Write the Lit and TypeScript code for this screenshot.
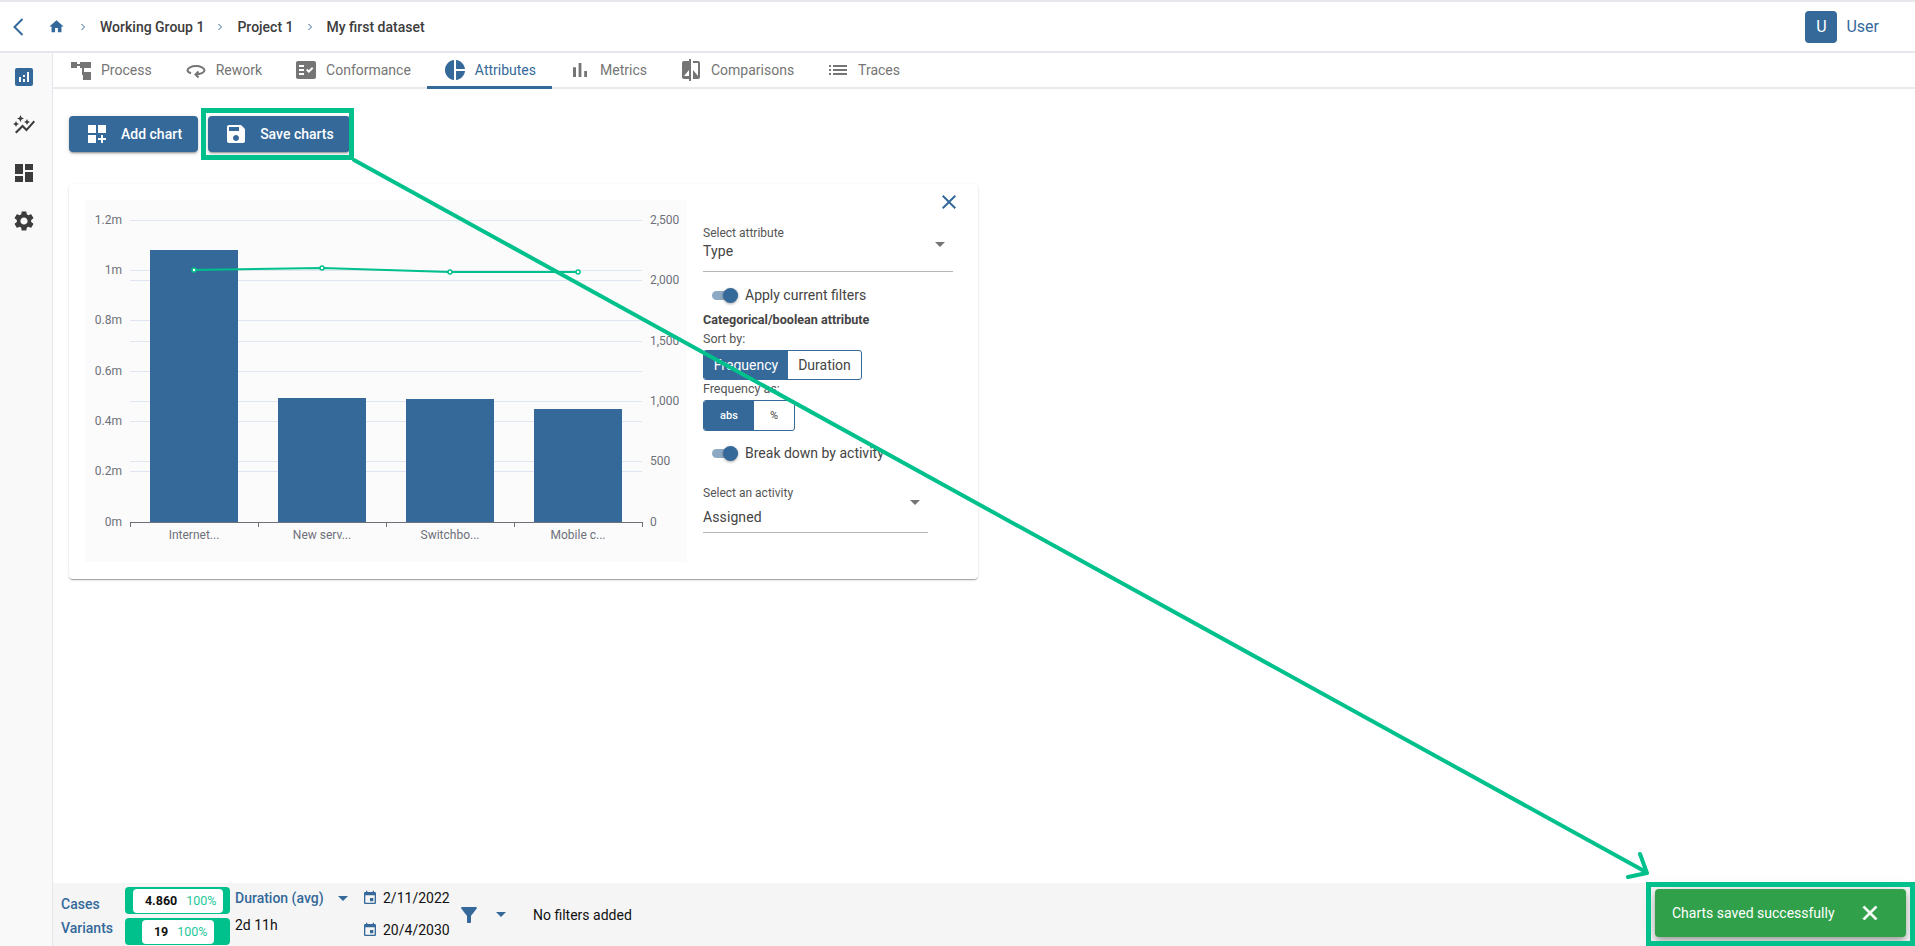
import { LitElement, html, css, svg } from "lit";
import { customElement } from "lit/decorators.js";

const P = {
  home: "M10 20v-6h4v6h5v-8h3L12 3 2 12h3v8z",
  analytics: "M19 3H5c-1.100 0-2 .9-2 2v14c0 1.100.9 2 2 2h14c1.100 0 2-.9 2-2V5c0-1.100-.9-2-2-2zM9 17H7v-5h2v5zm4 0h-2v-3h2v3zm0-5h-2v-2h2v2zm4 5h-2V7h2v10z",
  auto: "M14.060 9.940L12 9l2.060-.94L15 6l.94 2.060L18 9l-2.060.94L15 12zM4 14l.94-2.060L7 11l-2.060-.94L4 8l-.94 2.060L1 11l2.060.94L4 14zm4.500-5l1.090-2.410L12 5.500 9.590 4.410 8.500 2 7.410 4.410 5 5.500l2.410 1.090L8.500 9zm-4 11.500l6-6.010 4 4L23 8.930l-1.410-1.410-7.090 7.970-4-4L3 19l1.500 1.500z",
  dash: "M3 13h8V3H3v10zm0 8h8v-6H3v6zm10 0h8V11h-8v10zm0-18v6h8V3h-8z",
  gear: "M19.140 12.940c.04-.3.06-.61.06-.94 0-.32-.02-.64-.07-.94l2.030-1.580c.18-.14.23-.41.12-.61l-1.920-3.320c-.12-.22-.37-.29-.59-.22l-2.390.96c-.5-.38-1.030-.7-1.620-.94l-.36-2.540c-.04-.24-.24-.41-.48-.41h-3.840c-.24 0-.43.17-.47.41l-.36 2.540c-.59.24-1.130.57-1.620.94l-2.390-.96c-.22-.08-.47 0-.59.22L2.740 8.870c-.12.21-.08.47.12.61l2.030 1.580c-.05.3-.09.63-.09.94s.02.64.07.94l-2.030 1.580c-.18.14-.23.41-.12.61l1.920 3.320c.12.22.37.29.59.22l2.390-.96c.5.38 1.030.7 1.620.94l.36 2.540c.05.24.24.41.48.41h3.840c.24 0 .44-.17.47-.41l.36-2.540c.59-.24 1.130-.56 1.620-.94l2.390.96c.22.08.47 0 .59-.22l1.920-3.320c.12-.22.07-.47-.12-.61l-2.010-1.580zM12 15.600c-1.980 0-3.600-1.620-3.600-3.600s1.620-3.600 3.600-3.600 3.600 1.620 3.600 3.600-1.620 3.600-3.600 3.600z",
  process: "M2 4h6v6H2zM8 6h3V4h11v6H15v4h7v8h-8v-5h-1V10h-2V8H8z",
  check: "M20 3H4c-1.100 0-2 .9-2 2v14c0 1.100.9 2 2 2h16c1.100 0 2-.9 2-2V5c0-1.100-.9-2-2-2zM10 17H5v-2h5v2zm0-4H5v-2h5v2zm0-4H5V7h5v2zm4.820 6L12 12.160l1.410-1.410 1.410 1.420L17.990 9l1.420 1.420L14.820 15z",
  pie: "M11 2v20c-5.070-.5-9-4.790-9-10s3.930-9.500 9-10zm2.030 0v8.990H22c-.47-4.740-4.240-8.520-8.970-8.990zm0 11.010V22c4.740-.47 8.500-4.250 8.970-8.990h-8.970z",
  bars: "M5 9.200h3V19H5zM10.600 5h2.800v14h-2.800zm5.600 8H19v6h-2.800z",
  compare: "M10 3H5c-1.100 0-2 .9-2 2v14c0 1.100.9 2 2 2h5v2h2V1h-2v2zm0 15H5l5-6v6zm9-15h-5v2h5v13l-5-6v9h5c1.100 0 2-.9 2-2V5c0-1.100-.9-2-2-2z",
  list: "M3 13h2v-2H3v2zm0 4h2v-2H3v2zm0-8h2V7H3v2zm4 4h14v-2H7v2zm0 4h14v-2H7v2zM7 7v2h14V7H7z",
  add: "M3 3h8v8H3zm10 0h8v8h-8zM3 13h8v8H3zm15 0h-2v3h-3v2h3v3h2v-3h3v-2h-3z",
  save: "M17 3H5c-1.110 0-2 .9-2 2v14c0 1.100.89 2 2 2h14c1.100 0 2-.9 2-2V7l-4-4zm-5 16c-1.660 0-3-1.340-3-3s1.340-3 3-3 3 1.340 3 3-1.340 3-3 3zm3-10H5V5h10v4z",
  cal: "M17 12h-5v5h5v-5zM16 1v2H8V1H6v2H5c-1.110 0-1.990.9-1.990 2L3 19c0 1.100.89 2 2 2h14c1.100 0 2-.9 2-2V5c0-1.100-.9-2-2-2h-1V1h-2zm3 18H5V8h14v11z",
  filter: "M4.250 5.610C6.270 8.200 10 13 10 13v6c0 .55.45 1 1 1h2c.55 0 1-.45 1-1v-6s3.720-4.800 5.740-7.390c.51-.66.04-1.610-.79-1.610H5.040c-.83 0-1.300.95-.79 1.610z",
  close: "M19 6.410L17.590 5 12 10.590 6.410 5 5 6.410 10.590 12 5 17.590 6.410 19 12 13.410 17.590 19 19 17.590 13.410 12z",
};

const icon = (d: string, size = 24, cls = "") =>
  html`<svg class=${cls} width=${size} height=${size} viewBox="0 0 24 24" fill="currentColor"><path d=${d}></path></svg>`;

const reworkIcon = html`<svg width="24" height="24" viewBox="0 0 24 24" fill="none" stroke="currentColor" stroke-width="2"><path d="M7 15.300C4.700 14.600 3.500 13.500 3.500 12.300c0-2.300 3.900-4.300 8.500-4.300s8.500 2 8.500 4.300c0 2.200-3.700 4-8.800 4.200"></path><path d="M14.500 13.500l-3 3 3 3"></path></svg>`;

const caret = html`<svg class="caret" width="10" height="5" viewBox="0 0 10 5"><path d="M0 0h10L5 5z" fill="currentColor"></path></svg>`;

const crumbSep = html`<svg class="sep" width="6" height="8" viewBox="0 0 6 8" fill="none"><path d="M1.500 1L4.500 4 1.500 7" stroke="#34699a" stroke-width="1"></path></svg>`;

const tabs: [string, string][] = [
  [P.process, "Process"],
  ["", "Rework"],
  [P.check, "Conformance"],
  [P.pie, "Attributes"],
  [P.bars, "Metrics"],
  [P.compare, "Comparisons"],
  [P.list, "Traces"],
];

function chart() {
  const ox = 85, oy = 200;
  const leftTicks: [string, number][] = [["1.2m", 220], ["1m", 270], ["0.8m", 320], ["0.6m", 371], ["0.4m", 421], ["0.2m", 471], ["0m", 522]];
  const rightTicks: [string, number][] = [["2,500", 220], ["2,000", 280], ["1,500", 341], ["1,000", 401], ["500", 461], ["0", 522]];
  const bars = [[150, 250], [278, 398], [406, 399], [534, 409]];
  const labels: [string, number][] = [["Internet...", 194], ["New serv...", 322], ["Switchbo...", 450], ["Mobile c...", 578]];
  const pts = [[194, 270], [322, 268], [450, 272], [578, 272]];
  const poly = pts.map((p) => `${p[0] - ox},${p[1] - oy}`).join(" ");
  return html`<svg class="chart" width="602" height="362" viewBox="0 0 602 362">
    ${[...leftTicks, ...rightTicks].filter((t) => t[1] !== 522).map((t) => svg`<line x1=${130 - ox} x2=${642 - ox} y1=${t[1] - oy + 0.5} y2=${t[1] - oy + 0.5} stroke="#e0e6f1"></line>`)}
    ${leftTicks.map((t) => svg`<text x=${122 - ox} y=${t[1] - oy + 4} text-anchor="end" class="tick">${t[0]}</text>`)}
    ${rightTicks.map((t) => svg`<text x=${650 - ox} y=${t[1] - oy + 4} class="tick">${t[0]}</text>`)}
    ${bars.map((b) => svg`<rect x=${b[0] - ox} y=${b[1] - oy} width="88" height=${522 - b[1]} fill="#34699a"></rect>`)}
    <line x1=${130 - ox} x2=${642 - ox} y1=${522.5 - oy} y2=${522.5 - oy} stroke="#6e7079"></line>
    ${[130, 258, 386, 514, 642].map((x) => svg`<line x1=${x - ox + 0.5} x2=${x - ox + 0.5} y1=${522 - oy} y2=${527 - oy} stroke="#6e7079"></line>`)}
    ${labels.map((l) => svg`<text x=${l[1] - ox} y=${539 - oy} text-anchor="middle" class="tick">${l[0]}</text>`)}
    <polyline points=${poly} fill="none" stroke="#00c08b" stroke-width="2"></polyline>
    ${pts.map((p) => svg`<circle cx=${p[0] - ox} cy=${p[1] - oy} r="2" fill="#fff" stroke="#00c08b" stroke-width="1.500"></circle>`)}
  </svg>`;
}

@customElement("app-root")
export class AppRoot extends LitElement {
  static styles = css`
    :host {
      display: block;
      position: relative;
      width: 1915px;
      height: 946px;
      overflow: hidden;
      background: #fff;
      font-family: Roboto, "Liberation Sans", sans-serif;
      font-size: 14px;
      color: #3c3c3c;
    }
    svg { display: block; flex: none; }
    .page { display: flex; flex-direction: column; height: 946px; }
    .header {
      flex: none;
      height: 49px;
      border-top: 2px solid #e6e6ec;
      border-bottom: 2px solid #e6e6ec;
      display: flex;
      align-items: center;
      padding: 0 36px 0 13px;
    }
    .back { margin-right: 24px; color: #34699a; }
    .home { color: #34699a; margin-right: 15px; }
    .sep { margin-right: 14px; }
    .crumb { font-weight: 500; margin-right: 13px; color: #3c3c3c; }
    .spacer { flex: 1; }
    .avatar {
      width: 32px;
      height: 32px;
      border-radius: 4px;
      background: #34699a;
      color: #fff;
      display: flex;
      align-items: center;
      justify-content: center;
      font-size: 16px;
      margin-right: 9px;
    }
    .user { color: #34699a; font-size: 16px; }
    .body { flex: 1; display: flex; min-height: 0; }
    .side {
      flex: none;
      width: 48px;
      background: #f9f9f9;
      border-right: 1px solid #e6e6ec;
      display: flex;
      flex-direction: column;
      align-items: center;
      gap: 24px;
      padding: 12px 4px 0 0;
      color: #3c3c3c;
    }
    .side .on { color: #34699a; }
    .main { flex: 1; display: flex; flex-direction: column; min-width: 0; }
    .tabs {
      flex: none;
      height: 34px;
      display: flex;
      border-bottom: 2px solid #e9e9f0;
    }
    .tab {
      display: flex;
      align-items: center;
      gap: 8px;
      padding: 0 16px;
      color: #757575;
      position: relative;
      height: 34px;
    }
    .tab.on { color: #34699a; }
    .tab.on::after {
      content: "";
      position: absolute;
      left: 0;
      right: 0;
      bottom: -2px;
      height: 3px;
      background: #34699a;
    }
    .content { flex: 1; padding: 27px 16px 0 16px; min-height: 0; }
    .actions { display: flex; gap: 10px; height: 36px; }
    .btn {
      display: flex;
      align-items: center;
      gap: 12px;
      padding: 0 16px;
      background: #34699a;
      color: #fff;
      border-radius: 4px;
      font-weight: 500;
      box-shadow: 0 3px 1px -2px rgba(0,0,0,.2), 0 2px 2px 0 rgba(0,0,0,.14), 0 1px 5px 0 rgba(0,0,0,.12);
    }
    .card {
      position: relative;
      margin-top: 32px;
      width: 909px;
      height: 395px;
      box-sizing: border-box;
      padding: 16px 0 0 16px;
      border-radius: 4px;
      background: #fff;
      box-shadow: 0 2px 1px -1px rgba(0,0,0,.2), 0 1px 1px 0 rgba(0,0,0,.14), 0 1px 3px 0 rgba(0,0,0,.12);
      display: flex;
    }
    .chart { background: #fbfbfc; }
    .tick { font: 12px Roboto, "Liberation Sans", sans-serif; fill: #6e7079; }
    .close { position: absolute; top: 6px; right: 17px; color: #34699a; }
    .panel { margin-left: 16px; width: 250px; display: flex; flex-direction: column; align-items: flex-start; }
    .field { position: relative; width: 250px; height: 55px; margin-top: 16px; border-bottom: 1px solid #b5b5b5; }
    .field .lab { font-size: 12px; line-height: 14px; color: #555; padding-top: 10px; }
    .field .val { line-height: 18px; margin-top: 2px; color: #444; letter-spacing: .1px; }
    .field .caret { position: absolute; right: 8px; top: 26px; color: #757575; }
    .field.two { width: 225px; height: 55px; margin-top: 14px; }
    .field.two .lab { padding-top: 9px; }
    .field.two .val { margin-top: 8px; }
    .field.two .caret { top: 23px; }
    .toggle { display: flex; align-items: center; height: 20px; padding-left: 9px; gap: 7px; color: #444; }
    .toggle.first { margin-top: 13px; margin-bottom: 1px; }
    .toggle.second { margin-top: 12px; }
    .track { position: relative; width: 26px; height: 9px; border-radius: 5px; background: #8ea9c4; }
    .thumb {
      position: absolute;
      right: 0;
      top: -3px;
      width: 15px;
      height: 15px;
      border-radius: 50%;
      background: #34699a;
      box-shadow: 0 1px 3px rgba(0,0,0,.35);
    }
    .strong { font-size: 12.600px; font-weight: 700; line-height: 14px; margin-top: 7px; color: #444; }
    .small { font-size: 12.500px; line-height: 14px; margin-top: 5px; color: #555; }
    .small.tight { margin-top: 2px; }
    .group { display: flex; border: 1px solid #34699a; border-radius: 3px; margin-top: 4px; overflow: hidden; box-sizing: border-box; }
    .group div { display: flex; align-items: center; justify-content: center; }
    .group .fill { background: #34699a; color: #fff; }
    .g1 { height: 30px; width: 159px; }
    .g1 .fill { width: 84px; }
    .g1 div:last-child { flex: 1; color: #444; }
    .g2 { height: 31px; width: 92px; font-size: 11px; font-weight: 500; }
    .g2 .fill { width: 50px; }
    .g2 div:last-child { flex: 1; color: #666; }
    .status {
      flex: none;
      height: 63px;
      background: #f5f5f5;
      position: relative;
      display: flex;
      color: #111;
    }
    .s-names {
      width: 72px;
      padding: 13px 0 10px 8px;
      display: flex;
      flex-direction: column;
      color: #34699a;
      font-weight: 500;
      justify-content: space-between;
      box-sizing: border-box;
      font-size: 14px;
      line-height: 16px;
    }
    .s-pills { width: 105px; display: flex; flex-direction: column; gap: 4px; padding-top: 4px; }
    .pill { height: 27px; width: 105px; background: #00c08b; border-radius: 4px; display: flex; align-items: center; justify-content: center; }
    .pill > div {
      height: 24px;
      background: #fff;
      border-radius: 4px;
      display: flex;
      align-items: center;
      justify-content: flex-end;
      gap: 9px;
      box-sizing: border-box;
      padding-right: 6px;
    }
    .pill .n { font-weight: 700; font-size: 12.500px; color: #111; }
    .pill .p { font-size: 12.500px; color: #26c79a; }
    .w1 { width: 90px; }
    .w2 { width: 72px; }
    .s-dur { width: 127px; margin-left: 5px; padding-top: 6px; line-height: 18px; }
    .s-dur .h { display: flex; align-items: center; color: #34699a; font-weight: 500; gap: 14px; }
    .s-dur .h .caret { color: #34699a; }
    .s-dur .v { margin-top: 9px; }
    .s-dates { width: 90px; display: flex; flex-direction: column; gap: 14px; padding-top: 6px; }
    .s-dates .d { display: flex; align-items: center; gap: 5px; line-height: 18px; }
    .s-dates svg { color: #34699a; }
    .s-filter { display: flex; align-items: center; color: #34699a; }
    .s-filter .f { margin-left: 5px; }
    .s-filter .caret { margin-left: 15px; }
    .s-filter .t { color: #111; margin-left: 27px; }
    .mark { position: absolute; box-sizing: border-box; border: 5px solid #00c08b; pointer-events: none; }
    .mark.save { left: 201px; top: 108px; width: 153px; height: 52px; }
    .mark.toast { left: 1646px; top: 882px; width: 269px; height: 64px; }
    .toastbox {
      position: absolute;
      left: 1655px;
      top: 889px;
      width: 251px;
      height: 48px;
      border-radius: 4px;
      background: #30a14a;
      color: #fff;
      display: flex;
      align-items: center;
      justify-content: space-between;
      padding: 0 24px 0 17px;
      box-sizing: border-box;
      box-shadow: 0 3px 5px -1px rgba(0,0,0,.2), 0 6px 10px 0 rgba(0,0,0,.14), 0 1px 18px 0 rgba(0,0,0,.12);
    }
    .toastbox path { stroke: #fff; stroke-width: .8px; }
    .arrow { position: absolute; left: 0; top: 0; pointer-events: none; }
  `;

  render() {
    return html`
      <div class="page">
        <div class="header">
          <svg class="back" width="11" height="18" viewBox="0 0 11 18" fill="none"><path d="M9.500 1L1.500 9l8 8" stroke="currentColor" stroke-width="2"></path></svg>
          <span class="home">${icon(P.home, 17)}</span>
          ${crumbSep}<span class="crumb">Working Group 1</span>
          ${crumbSep}<span class="crumb">Project 1</span>
          ${crumbSep}<span class="crumb">My first dataset</span>
          <div class="spacer"></div>
          <div class="avatar">U</div>
          <div class="user">User</div>
        </div>
        <div class="body">
          <div class="side">
            ${icon(P.analytics, 24, "on")}
            ${icon(P.auto)}
            ${icon(P.dash)}
            ${icon(P.gear)}
          </div>
          <div class="main">
            <div class="tabs">
              ${tabs.map((t) => html`<div class="tab ${t[1] === "Attributes" ? "on" : ""}">${t[0] ? icon(t[0]) : reworkIcon}<span>${t[1]}</span></div>`)}
            </div>
            <div class="content">
              <div class="actions">
                <div class="btn">${icon(P.add)}<span>Add chart</span></div>
                <div class="btn">${icon(P.save)}<span>Save charts</span></div>
              </div>
              <div class="card">
                ${chart()}
                <span class="close">${icon(P.close)}</span>
                <div class="panel">
                  <div class="field">
                    <div class="lab">Select attribute</div>
                    <div class="val">Type</div>
                    ${caret}
                  </div>
                  <div class="toggle first"><div class="track"><div class="thumb"></div></div><span>Apply current filters</span></div>
                  <div class="strong">Categorical/boolean attribute</div>
                  <div class="small">Sort by:</div>
                  <div class="group g1"><div class="fill">Frequency</div><div>Duration</div></div>
                  <div class="small tight">Frequency as:</div>
                  <div class="group g2"><div class="fill">abs</div><div>%</div></div>
                  <div class="toggle second"><div class="track"><div class="thumb"></div></div><span>Break down by activity</span></div>
                  <div class="field two">
                    <div class="lab">Select an activity</div>
                    <div class="val">Assigned</div>
                    ${caret}
                  </div>
                </div>
              </div>
            </div>
            <div class="status">
              <div class="s-names"><span>Cases</span><span>Variants</span></div>
              <div class="s-pills">
                <div class="pill"><div class="w1"><span class="n">4.860</span><span class="p">100%</span></div></div>
                <div class="pill"><div class="w2"><span class="n">19</span><span class="p">100%</span></div></div>
              </div>
              <div class="s-dur">
                <div class="h"><span>Duration (avg)</span>${caret}</div>
                <div class="v">2d 11h</div>
              </div>
              <div class="s-dates">
                <div class="d">${icon(P.cal, 16)}<span>2/11/2022</span></div>
                <div class="d">${icon(P.cal, 16)}<span>20/4/2030</span></div>
              </div>
              <div class="s-filter">
                <span class="f">${icon(P.filter)}</span>
                ${caret}
                <span class="t">No filters added</span>
              </div>
            </div>
          </div>
        </div>
      </div>

      <div class="toastbox">
        <span>Charts saved successfully</span>
        ${icon(P.close)}
      </div>
      <div class="mark save"></div>
      <div class="mark toast"></div>
      <svg class="arrow" width="1915" height="946" viewBox="0 0 1915 946" fill="none">
        <path d="M354 160L1646 872M1640 854L1647 873 1628 877" stroke="#00c08b" stroke-width="4" stroke-linecap="round" stroke-linejoin="round"></path>
      </svg>
    `;
  }
}
